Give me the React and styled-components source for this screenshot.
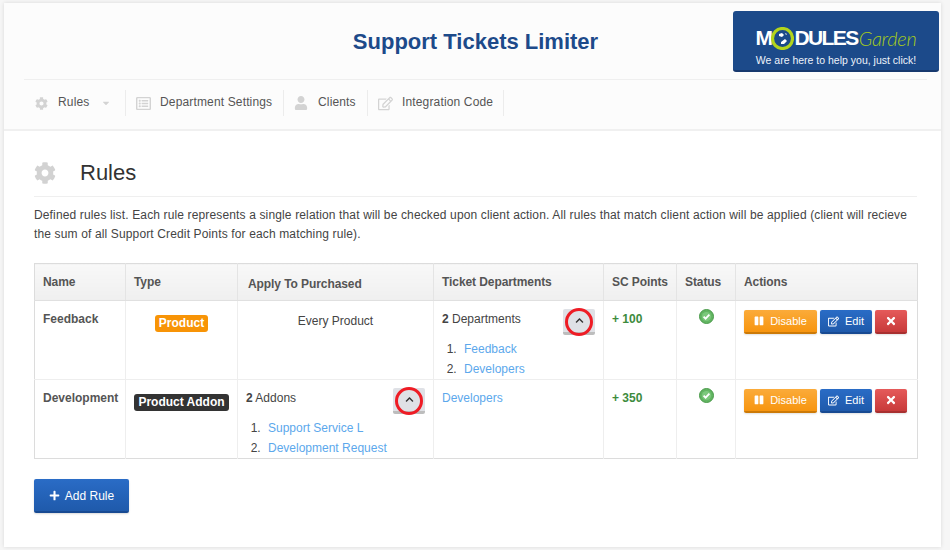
import React from "react";
import styled, { createGlobalStyle } from "styled-components";
import { FaCog, FaUser, FaRegEdit, FaRegListAlt, FaPause, FaTimes, FaPlus, FaChevronUp, FaCaretDown } from "react-icons/fa";

const Global = createGlobalStyle`
  html, body { margin: 0; padding: 0; background: #f6f6f6; }
  body { font-family: "Liberation Sans", Arial, sans-serif; font-size: 12px; color: #444; width: 950px; height: 550px; overflow: hidden; }
  * { box-sizing: border-box; }
`;
const Page = styled.div`padding: 3px 9px 3px 4px; height: 550px;`;
const Card = styled.div`
  background: #fff; height: 544px; width: 937px;
  box-shadow: 0 0 4px rgba(0,0,0,.12);
`;
const Header = styled.header`
  background: #fcfcfc; height: 128px; border-bottom: 2px solid #f0f0f0;
  padding: 8px 14px 0 20px;
`;
const TopRow = styled.div`display: flex; height: 68px; align-items: flex-start;`;
const Title = styled.h1`
  flex: 1; margin: 0 -194px 0 0; padding: 18px 0 0; text-align: center; font-size: 22px; line-height: 26px;
  font-weight: bold; color: #1d4a8a;
`;
const Logo = styled.a`
  width: 206px; height: 61px; background: #1c4a8a; border-radius: 3px; border-bottom: 2px solid #17396e;
  display: flex; flex-direction: column; align-items: center; color: #fff; padding-top: 14px; margin-right: -12px;
`;
const LogoMark = styled.div`display: flex; align-items: center; height: 26px; font-size: 21px; font-weight: bold; letter-spacing: -1.6px;`;
const LogoG = styled.span`font-family: Lato, "Liberation Sans", sans-serif; font-style: italic; font-weight: 300; color: #a6cc1a; font-size: 20px; letter-spacing: -.3px; margin-left: 1px;`;
const LogoTag = styled.div`font-size: 10.5px; margin-top: 3px; color: #eef3fb;`;
const Nav = styled.nav`
  border-top: 1px solid #efefef; height: 48px; display: flex; align-items: center; width: 903px;
`;
const NavItem = styled.a`
  display: flex; align-items: center; height: 26px; border-right: 1px solid #ececec; color: #555;
  width: ${p => p.$w}px; padding-left: ${p => p.$pl}px; margin-top: -1px; font-size: 12px; letter-spacing: .15px;
  svg { color: #d3d3d3; }
`;
const NavLabel = styled.span`margin-left: ${p => p.$ml}px; position: relative; top: -1px;`;
const Caret = styled.span`margin-left: 12px; display: flex; color: #ccc;`;
const Content = styled.main`padding: 0 24px 0 30px;`;
const Heading = styled.div`
  display: flex; align-items: center; height: 66px; padding-top: 18px; border-bottom: 1px solid #efefef; color: #333;
  svg { color: #d2d2d2; }
`;
const HeadingText = styled.h2`font-size: 22px; font-weight: normal; margin: 0 0 0 24px; color: #333;`;
const Desc = styled.p`margin: 9px 0 0; font-size: 12px; line-height: 19px; color: #444; letter-spacing: .14px;`;
const Table = styled.table`
  margin-top: 19px; width: 883px; table-layout: fixed; border-collapse: collapse; border: 1px solid #dcdcdc;
`;
const Th = styled.th`
  background: linear-gradient(#f8f8f8, #efefef); height: 37px; text-align: left; padding: ${p => p.$pt || 0}px 0 0 ${p => p.$pl || 8}px;
  border-right: 1px solid #e4e4e4; border-bottom: 1px solid #e0e0e0; font-size: 12px; color: #555; vertical-align: middle; letter-spacing: -.08px;
  &:last-child { border-right: 0; }
`;
const Td = styled.td`
  height: 79px; vertical-align: top; padding: 10px 8px 0; border-right: 1px solid #eee; border-bottom: 1px solid #eee;
  overflow: hidden; line-height: 16px;
  &:last-child { border-right: 0; }
  tr:last-child & { border-bottom: 0; }
`;
const Name = styled.b`color: #555; font-size: 12px;`;
const Center = styled.div`text-align: center; padding-top: ${p => p.$pt || 0}px;`;
const Badge = styled.span`
  display: inline-block; padding: 0 4px; height: 17px; line-height: 17px; border-radius: 3px; color: #fff; font-weight: bold; font-size: 12px; white-space: nowrap;
  background: ${p => p.$dark ? "#333" : "#f89406"};
`;
const Toggle = styled.button`
  position: relative; float: right; width: 32px; height: 26px; margin: -2px 0 0; border: 0; padding: 0; border-radius: 2px;
  background: #dfe1e6; border-bottom: 3px solid #bdbdbd; color: #333; display: flex; align-items: center; justify-content: center;
`;
const Ring = styled.span`
  position: absolute; left: 2px; top: -1px; width: 28px; height: 28px; border: 3px solid #ee1c25; border-radius: 50%;
`;
const List = styled.ol`margin: 12px 0 0; padding: 0 0 0 18px;`;
const Li = styled.li`line-height: 20px; padding-left: 4px; color: #444;`;
const Link = styled.a`color: #5ca8ec;`;
const Points = styled.b`color: #3d8b3d; font-size: 12px;`;
const Actions = styled.div`display: flex; gap: 3px; margin-top: -1px;`;
const Btn = styled.a`
  height: 24px; display: flex; align-items: center; justify-content: center; gap: 6px; color: #fff; border-radius: 2px; font-size: 11px;
  width: ${p => p.$w}px;
  background: ${p => p.$c}; border-bottom: 2px solid ${p => p.$b};
  box-shadow: 0 1px 2px rgba(0,0,0,.12);
`;
const AddBtn = styled.a`
  margin-top: 20px; width: 95px; height: 34px; display: flex; align-items: center; justify-content: center; gap: 5px; padding-top: 1px;
  background: linear-gradient(#2a6cc6, #1f5aab); border-bottom: 2px solid #184a92; color: #fff; border-radius: 2px; font-size: 12px;
  box-shadow: 0 1px 2px rgba(0,0,0,.15);
`;
const CheckWrap = styled.div`text-align: center; margin-top: -2px;`;

const Check = () => (
  <svg width="15" height="15" viewBox="0 0 15 15">
    <circle cx="7.5" cy="7.5" r="7" fill="#62b562" stroke="#4a9a4a" />
    <circle cx="7.5" cy="7.5" r="4.6" fill="#7cc87c" />
    <path d="M4.6 7.6l2 2 3.8-4" fill="none" stroke="#fff" strokeWidth="1.8" />
  </svg>
);
const Globe = () => (
  <svg width="23" height="23" viewBox="0 0 23 23">
    <circle cx="11.5" cy="11.5" r="10" fill="#1c4a8a" stroke="#b3d41c" strokeWidth="3.2" />
    <path d="M8 7l3-1 2 2-2 2-3-1zM10 15l4-3 2 2-3 3-3 0zM14 6l2 1-1 1z" fill="#fff" />
  </svg>
);
const RowActions = () => (
  <Actions>
    <Btn $w={73} $c="linear-gradient(#fbab3a,#f7950f)" $b="#cc7a08"><FaPause size={10} /> Disable</Btn>
    <Btn $w={52} $c="linear-gradient(#2a6cc6,#1f5aab)" $b="#184a92"><FaRegEdit size={11} /> Edit</Btn>
    <Btn $w={32} $c="linear-gradient(#e55a5a,#c83a3a)" $b="#a83030"><FaTimes size={12} /></Btn>
  </Actions>
);
const ToggleBtn = () => (
  <Toggle><FaChevronUp size={9} /><Ring /></Toggle>
);

export default function App() {
  return (
    <Page>
      <Global />
      <Card>
        <Header>
          <TopRow>
            <Title>Support Tickets Limiter</Title>
            <Logo>
              <LogoMark>M<Globe />DULES<LogoG>Garden</LogoG></LogoMark>
              <LogoTag>We are here to help you, just click!</LogoTag>
            </Logo>
          </TopRow>
          <Nav>
            <NavItem $w={102} $pl={11}><FaCog size={13} /><NavLabel $ml={10}>Rules</NavLabel><Caret><FaCaretDown size={10} /></Caret></NavItem>
            <NavItem $w={158} $pl={10}><FaRegListAlt size={15} /><NavLabel $ml={9}>Department Settings</NavLabel></NavItem>
            <NavItem $w={84} $pl={10}><FaUser size={14} /><NavLabel $ml={10}>Clients</NavLabel></NavItem>
            <NavItem $w={136} $pl={10}><FaRegEdit size={15} /><NavLabel $ml={9}>Integration Code</NavLabel></NavItem>
          </Nav>
        </Header>
        <Content>
          <Heading><FaCog size={22} /><HeadingText>Rules</HeadingText></Heading>
          <Desc>Defined rules list. Each rule represents a single relation that will be checked upon client action. All rules that match client action will be applied (client will recieve the sum of all Support Credit Points for each matching rule).</Desc>
          <Table>
            <colgroup>
              <col width="91" /><col width="112" /><col width="196" /><col width="170" /><col width="73" /><col width="59" /><col width="182" />
            </colgroup>
            <thead>
              <tr>
                <Th>Name</Th><Th>Type</Th><Th $pt={4} $pl={10}>Apply To Purchased</Th><Th>Ticket Departments</Th><Th>SC Points</Th><Th>Status</Th><Th>Actions</Th>
              </tr>
            </thead>
            <tbody>
              <tr>
                <Td><Name>Feedback</Name></Td>
                <Td><Center $pt={4}><Badge>Product</Badge></Center></Td>
                <Td><Center $pt={2}>Every Product</Center></Td>
                <Td><ToggleBtn /><b>2</b> Departments
                  <List><Li><Link>Feedback</Link></Li><Li><Link>Developers</Link></Li></List>
                </Td>
                <Td><Points>+ 100</Points></Td>
                <Td><CheckWrap><Check /></CheckWrap></Td>
                <Td><RowActions /></Td>
              </tr>
              <tr>
                <Td><Name>Development</Name></Td>
                <Td><Center $pt={4}><Badge $dark>Product Addon</Badge></Center></Td>
                <Td><ToggleBtn /><b>2</b> Addons
                  <List><Li><Link>Support Service L</Link></Li><Li><Link>Development Request</Link></Li></List>
                </Td>
                <Td><Link>Developers</Link></Td>
                <Td><Points>+ 350</Points></Td>
                <Td><CheckWrap><Check /></CheckWrap></Td>
                <Td><RowActions /></Td>
              </tr>
            </tbody>
          </Table>
          <AddBtn><FaPlus size={11} /> Add Rule</AddBtn>
        </Content>
      </Card>
    </Page>
  );
}
